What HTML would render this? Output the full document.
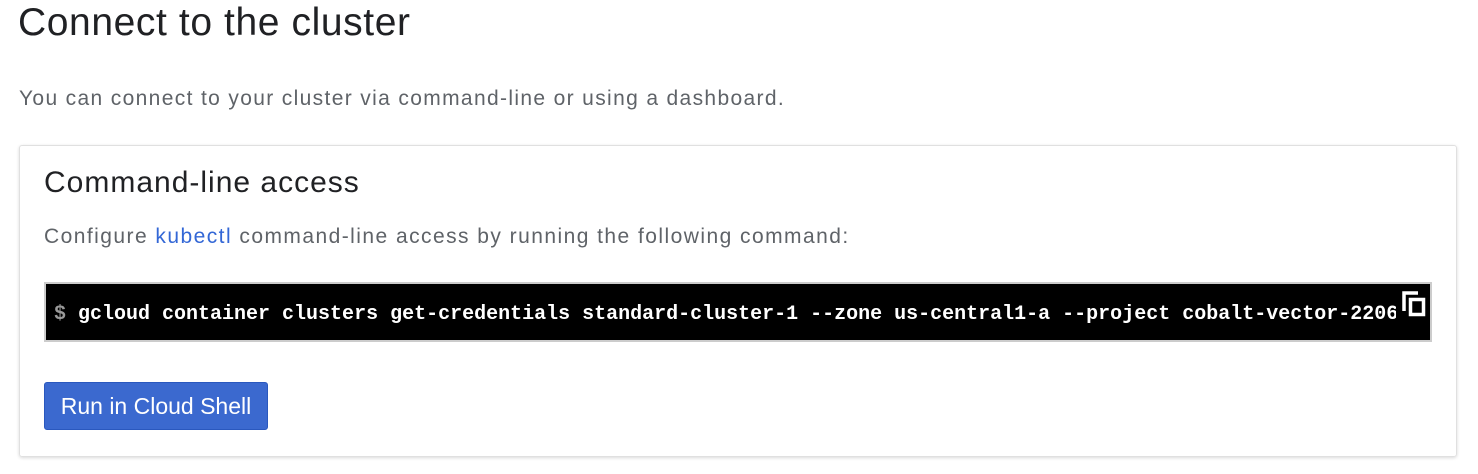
<!DOCTYPE html>
<html><head><style>
body{margin:0;background:#fff;width:1478px;height:474px;overflow:hidden;font-family:"Liberation Sans",Arial,sans-serif;position:relative}
.a{position:absolute;white-space:nowrap}
</style></head><body>
<div class="a" style="left:18px;top:0px;font-size:39px;letter-spacing:0.6px;color:#202124;line-height:46px">Connect to the cluster</div>
<div class="a" style="left:19px;top:86px;font-size:21px;letter-spacing:1.35px;color:#5f6368;line-height:26px">You can connect to your cluster via command-line or using a dashboard.</div>
<div class="a" style="left:19px;top:145px;width:1436px;height:310px;border:1px solid #e0e0e0;border-radius:3px;box-shadow:0 1px 3px rgba(0,0,0,0.15)"></div>
<div class="a" style="left:44px;top:164px;font-size:30px;letter-spacing:1px;color:#202124;line-height:38px">Command-line access</div>
<div class="a" style="left:44px;top:223px;font-size:21px;letter-spacing:1.45px;color:#5f6368;line-height:28px">Configure <span style="color:#3367d6">kubectl</span> command-line access by running the following command:</div>
<div class="a" style="left:44px;top:282px;width:1384px;height:56px;background:#000;border:2px solid #ccc;overflow:hidden">
<div style="position:absolute;left:8px;top:17px;width:1342px;overflow:hidden;font-family:'Liberation Mono',monospace;font-size:20px;font-weight:bold;color:#fff;line-height:28px"><span style="color:#999">$</span> gcloud container clusters get-credentials standard-cluster-1 --zone us-central1-a --project cobalt-vector-220615</div>
<svg style="position:absolute;left:1355px;top:6px" width="26" height="28" viewBox="0 0 26 28"><path d="M3 21V3h14" stroke="#fff" stroke-width="3.5" fill="none"/><rect x="9.5" y="9.5" width="13" height="15" stroke="#fff" stroke-width="3.5" fill="none"/></svg>
</div>
<div class="a" style="left:44px;top:382px;width:222px;height:46px;background:#3b69cf;border:1px solid #2a58be;border-radius:3px;color:#fff;font-size:23px;line-height:46px;text-align:center">Run in Cloud Shell</div>
</body></html>
